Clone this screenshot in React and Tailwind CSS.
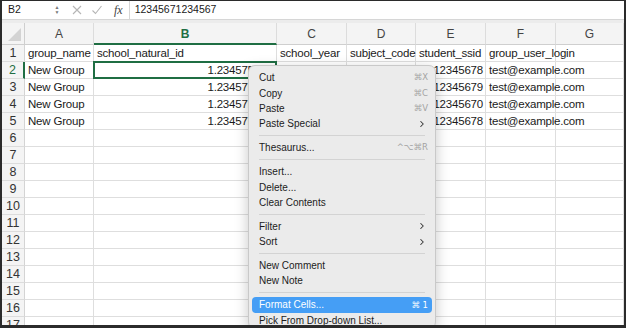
import { ChevronRight } from 'lucide-react';

const cols = ['A', 'B', 'C', 'D', 'E', 'F', 'G'];
const widths = 'grid-cols-[23px_69px_183px_70px_69px_70px_70px_68px]';

const data = [
  ['group_name', 'school_natural_id', 'school_year', 'subject_code', 'student_ssid', 'group_user_login', ''],
  ['New Group', '1.23457E+13', '', '', '12345678', 'test@example.com', ''],
  ['New Group', '1.23457E+13', '', '', '12345679', 'test@example.com', ''],
  ['New Group', '1.23457E+13', '', '', '12345670', 'test@example.com', ''],
  ['New Group', '1.23457E+13', '', '', '12345678', 'test@example.com', ''],
];

const menu = [
  { label: 'Cut', key: '⌘X' },
  { label: 'Copy', key: '⌘C' },
  { label: 'Paste', key: '⌘V' },
  { label: 'Paste Special', sub: true },
  'sep',
  { label: 'Thesaurus...', key: '^⌥⌘R' },
  'sep',
  { label: 'Insert...' },
  { label: 'Delete...' },
  { label: 'Clear Contents' },
  'sep',
  { label: 'Filter', sub: true },
  { label: 'Sort', sub: true },
  'sep',
  { label: 'New Comment' },
  { label: 'New Note' },
  'sep',
  { label: 'Format Cells...', key: '⌘ 1', active: true },
  { label: 'Pick From Drop-down List...' },
];

function Cell({ value, col, row }) {
  const numeric = /^[0-9.E+]+$/.test(value);
  const selected = col === 1 && row === 2;
  return (
    <div className="relative h-[17px] border-r border-b border-[#dedede]">
      {value && (
        <div
          className={`absolute top-0 h-[16px] leading-[16px] whitespace-nowrap ${numeric ? 'right-[2px]' : 'left-[3px]'}`}
        >
          {value}
        </div>
      )}
      {selected && <div className="absolute -left-px -top-px right-[-1px] bottom-[-1px] border-2 border-[#1f6e43]" />}
    </div>
  );
}

export default function App() {
  const rows = Array.from({ length: 17 }, (_, i) => i + 1);
  return (
    <div className="relative w-[626px] h-[328px] overflow-hidden bg-white border-x-2 border-t border-b-[3px] border-[#2b2b2b] font-['Liberation_Sans',sans-serif] text-[#1a1a1a]">
      {/* formula bar */}
      <div className="flex h-[19px] items-center bg-white border-b border-[#d6d6d6] text-[10.5px]">
        <div className="w-[50px] pl-[6px]">B2</div>
        <div className="flex w-[10px] flex-col items-center text-[5px] leading-[5px] text-[#777]">
          <span>▲</span>
          <span>▼</span>
        </div>
        <svg width="12" height="12" viewBox="0 0 12 12" className="ml-[9px]" fill="none" stroke="#b5b5b5" strokeWidth="1.1">
          <path d="M2 2l8 8M10 2l-8 8" />
        </svg>
        <svg width="12" height="12" viewBox="0 0 12 12" className="ml-[8px]" fill="none" stroke="#b5b5b5" strokeWidth="1.1">
          <path d="M1.5 6.5l3 3 6-7.5" />
        </svg>
        <span className="ml-[11px] font-['Liberation_Serif',serif] italic text-[12px] text-[#444]">fx</span>
        <div className="ml-[6px] flex h-full flex-1 items-center border-l border-[#d6d6d6] pl-[5px]">12345671234567</div>
      </div>
      <div className="h-[3px] bg-[#ececec]" />

      {/* sheet */}
      <div className={`grid ${widths} text-[11.5px] tracking-[-0.2px]`}>
        <div className="flex h-[22px] items-end justify-end border-r border-b border-[#cfcfcf] bg-[#f4f4f4] p-[3px]">
          <svg width="13" height="13" viewBox="0 0 13 13">
            <path d="M13 0L13 13L0 13Z" fill="#d3d3d3" />
          </svg>
        </div>
        {cols.map((c) => (
          <div
            key={c}
            className={`h-[22px] border-r border-[#dcdcdc] bg-[#f4f4f4] text-center leading-[22px] text-[12px] tracking-normal ${c === 'B' ? 'border-b-2 border-b-[#1f6e43] font-bold text-[#1f6e43]' : 'border-b border-b-[#cfcfcf] text-[#444]'}`}
          >
            {c}
          </div>
        ))}
        {rows.map((r) => (
          <div key={r} className="contents">
            <div
              className={`h-[17px] border-b border-[#dcdcdc] bg-[#f4f4f4] text-center leading-[17px] text-[12.5px] tracking-normal ${r === 2 ? 'border-r-2 border-r-[#1f6e43] text-[#1f6e43]' : 'border-r border-r-[#d4d4d4] text-[#333]'}`}
            >
              {r}
            </div>
            {cols.map((c, ci) => (
              <Cell key={c} col={ci} row={r} value={data[r - 1] ? data[r - 1][ci] : ''} />
            ))}
          </div>
        ))}
      </div>

      {/* context menu */}
      <div className="absolute left-[246px] top-[64px] w-[188px] rounded-[7px] border border-[#c9c9c9] bg-[#ebebeb] px-[3px] pt-[4px] shadow-[0_4px_14px_rgba(0,0,0,0.22)] text-[10px] text-[#1c1c1c]">
        {menu.map((m, i) =>
          m === 'sep' ? (
            <div key={i} className="flex h-[8.5px] items-center px-[7px]">
              <div className="h-px w-full bg-[#d3d3d3]" />
            </div>
          ) : (
            <div
              key={i}
              className={`flex h-[15.4px] items-center justify-between rounded-[4px] pl-[7px] pr-[4px] ${m.active ? 'bg-[#459ef5] text-white' : ''}`}
            >
              <span>{m.label}</span>
              {m.key && (
                <span className={`font-['DejaVu_Sans',sans-serif] text-[8.5px] ${m.active ? 'text-white' : 'text-[#a3a3a3]'}`}>{m.key}</span>
              )}
              {m.sub && <ChevronRight size={10} strokeWidth={2.5} className="mr-[1px] text-[#333]" />}
            </div>
          )
        )}
      </div>
    </div>
  );
}
